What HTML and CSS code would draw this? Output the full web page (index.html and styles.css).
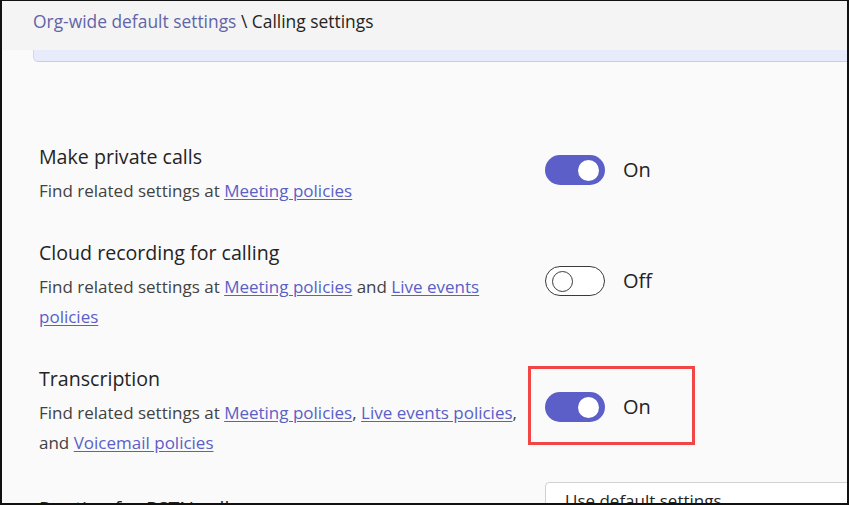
FILE: index.html
```html
<!DOCTYPE html>
<html lang="en">
<head>
<meta charset="utf-8">
<title>Calling settings</title>
<link rel="stylesheet" href="styles.css">
</head>
<body>
<div class="frame">
  <header class="topbar">
    <nav class="crumbs"><a class="crumb-link">Org-wide default settings</a><span class="crumb-sep"> \ </span><span class="crumb-current">Calling settings</span></nav>
  </header>
  <div class="strip"></div>
  <main class="settings">
    <section class="row">
      <div class="info">
        <div class="title">Make private calls</div>
        <div class="desc">Find related settings at <a class="lnk">Meeting policies</a></div>
      </div>
      <div class="control">
        <span class="toggle on"><span class="knob"></span></span>
        <span class="state">On</span>
      </div>
    </section>
    <section class="row">
      <div class="info">
        <div class="title">Cloud recording for calling</div>
        <div class="desc">Find related settings at <a class="lnk">Meeting policies</a> and <a class="lnk">Live events policies</a></div>
      </div>
      <div class="control">
        <span class="toggle off"><span class="knob"></span></span>
        <span class="state">Off</span>
      </div>
    </section>
    <section class="row">
      <div class="info">
        <div class="title">Transcription</div>
        <div class="desc">Find related settings at <a class="lnk">Meeting policies</a>, <a class="lnk">Live events policies</a>, and <a class="lnk">Voicemail policies</a></div>
      </div>
      <div class="control highlighted">
        <span class="toggle on"><span class="knob"></span></span>
        <span class="state">On</span>
      </div>
    </section>
    <section class="row last">
      <div class="info">
        <div class="title">Routing for PSTN calls</div>
        <div class="desc">Find related settings at <a class="lnk">Voice routing policies</a></div>
      </div>
      <div class="select">Use default settings</div>
    </section>
  </main>
</div>
</body>
</html>
```

FILE: styles.css
```css
* { box-sizing: border-box; }
html, body { margin: 0; padding: 0; }
body {
  width: 849px;
  height: 505px;
  overflow: hidden;
  background: #fafafa;
  font-family: "Open Sans", "Noto Sans", sans-serif;
  color: #242424;
}
.frame {
  width: 849px;
  height: 505px;
  overflow: hidden;
  border-top: 1px solid #111;
  border-left: 2px solid #111;
  border-right: 2px solid #111;
  border-bottom: 2px solid #111;
  background: #fafafa;
}
.topbar {
  height: 49px;
  background: #f4f4f4;
  display: flex;
  align-items: center;
  padding-left: 31px;
  padding-bottom: 10px;
}
.crumbs { font-size: 17.4px; }
.crumb-link { color: #6264a7; }
.crumb-sep, .crumb-current { color: #242424; }
.strip {
  margin-left: 31px;
  height: 12px;
  background: #e8ebfa;
  border-left: 1px solid #d3d7f5;
  border-bottom: 1px solid #c5cbf5;
  border-bottom-left-radius: 5px;
}
.settings {
  padding-left: 37px;
  padding-top: 83px;
  display: flex;
  flex-direction: column;
  gap: 35px;
}
.row {
  display: grid;
  grid-template-columns: 484px auto;
  column-gap: 22px;
  align-items: center;
  justify-items: start;
}
.title {
  font-size: 19.6px;
  line-height: 24px;
}
.desc {
  margin-top: 7px;
  font-size: 17px;
  line-height: 30px;
  color: #424242;
}
.lnk {
  color: #5b5fc7;
  text-decoration: underline;
  text-underline-offset: 2px;
}
.control {
  display: flex;
  align-items: center;
  gap: 18px;
  margin-bottom: 11px;
  position: relative;
}
.toggle {
  width: 60px;
  height: 30px;
  border-radius: 15px;
  display: flex;
  align-items: center;
  flex: none;
}
.toggle.on {
  background: #5b5fc7;
  justify-content: flex-end;
  padding-right: 6px;
}
.toggle.on .knob {
  width: 21px;
  height: 21px;
  border-radius: 50%;
  background: #fff;
}
.toggle.off {
  border: 1px solid #3a3a3a;
  background: #fff;
  padding-left: 6px;
}
.toggle.off .knob {
  width: 21px;
  height: 21px;
  border-radius: 50%;
  border: 1px solid #3a3a3a;
  background: #fff;
}
.state {
  font-size: 20px;
  line-height: 24px;
  color: #242424;
}
.highlighted::after {
  content: "";
  position: absolute;
  top: -26px;
  left: -17px;
  right: -44px;
  bottom: -23px;
  border: 3px solid #f24646;
  pointer-events: none;
}
.row.last {
  align-items: start;
  margin-top: 4px;
}
.select {
  margin-top: -15px;
  height: 40px;
  width: 320px;
  background: #fff;
  border: 1px solid #d1d1d1;
  border-radius: 4px;
  padding: 6px 19px;
  font-size: 17px;
  color: #242424;
}
```
